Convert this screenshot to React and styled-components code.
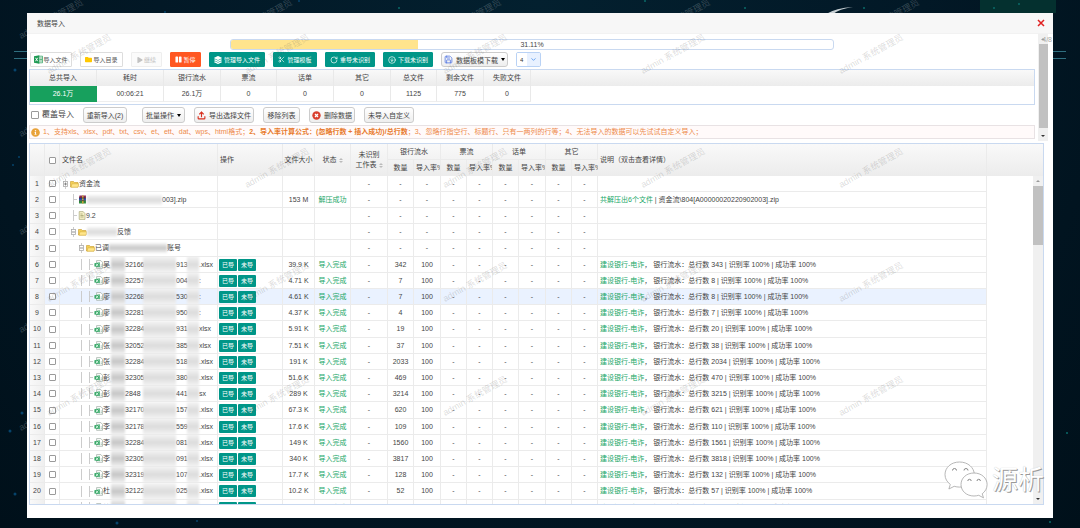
import React, { useState } from 'react';
import styled, { createGlobalStyle, css } from 'styled-components';
import { FaPlay, FaPause, FaFolder, FaLayerGroup, FaInfoCircle } from 'react-icons/fa';
import { RotateCw, CircleArrowDown, Save, Upload, ChevronDown, Scissors } from 'lucide-react';

const GlobalStyle = createGlobalStyle`
  * {
    box-sizing: border-box;
  }
  body {
    margin: 0;
    background: #00121e;
    font-family: "Liberation Sans", "Noto Sans CJK SC", sans-serif;
    font-size: 7px;
    line-height: 10px;
    color: #444;
  }
  button, input, select {
    font-family: inherit;
    margin: 0;
  }
`;

const PageStyles = styled.div`
  position: relative;
  min-height: 100vh;
  padding: 13px 27px 10px;
  overflow: hidden;
  background: radial-gradient(ellipse at 50% 0, #03202f 0%, #021826 50%, #00101a 100%);
`;

const Backdrop = styled.svg`
  position: absolute;
  top: 0;
  left: 0;
  width: 100%;
  height: 100%;
`;

const Modal = styled.section`
  position: relative;
  background: #fff;
  padding-bottom: 13px;
`;

const TitleBar = styled.header`
  display: flex;
  align-items: center;
  justify-content: space-between;
  height: 21px;
  padding: 0 8px 0 10px;
  background: #f7f7f7;
  border-bottom: 1px solid #f2f2f2;
  h1 {
    margin: 0;
    font-size: 7px;
    line-height: 9px;
    font-weight: 400;
  }
`;

const CloseButton = styled.button`
  display: flex;
  padding: 0;
  border: 0;
  background: none;
`;

const Body = styled.div`
  position: relative;
  overflow: hidden;
`;

const TopPane = styled.div`
  display: flex;
  gap: 3px;
  height: 107px;
  padding: 0 5px 0 2px;
`;

const TopContent = styled.div`
  flex: 1;
  display: flex;
  flex-direction: column;
  gap: 2px;
  padding-top: 5px;
`;

const ProgressTrack = styled.div`
  position: relative;
  width: 60%;
  height: 11px;
  margin: 0 auto;
  border: 1px solid #c9d9f0;
  border-radius: 3px;
  text-align: center;
  line-height: 9px;
  overflow: hidden;
`;

const ProgressFill = styled.div`
  position: absolute;
  top: 0;
  left: 0;
  bottom: 0;
  background: #ffe48d;
`;

const ButtonRow = styled.div`
  display: flex;
  align-items: center;
  gap: 8px;
  height: 15px;
  padding-left: 1px;
`;

const tones = {
  plain: css`
    background: #fff;
    border-color: #ddd;
    color: #555;
  `,
  disabled: css`
    background: #fbfbfb;
    border-color: #eee;
    color: #c2c2c2;
  `,
  orange: css`
    background: #ff5722;
    border-color: #ff5722;
    color: #fff;
  `,
  teal: css`
    background: #009688;
    border-color: #009688;
    color: #fff;
  `,
};

const ActionButton = styled.button`
  display: flex;
  align-items: center;
  justify-content: center;
  gap: ${p => p.$gap || 0}px;
  width: ${p => p.$width}px;
  height: 15px;
  padding: 0;
  border: 1px solid;
  border-radius: 1px;
  font-size: 6px;
  line-height: 8px;
  white-space: nowrap;
  ${p => tones[p.$tone]}
`;

const SoftButton = styled.button`
  display: flex;
  align-items: center;
  justify-content: center;
  gap: 3px;
  width: ${p => p.$width}px;
  height: ${p => p.$height || 16}px;
  margin-right: ${p => p.$after || 0}px;
  padding: 0;
  border: 1px solid #ccc;
  border-radius: 3px;
  background: linear-gradient(#fff, #eee);
  color: #444;
  font-size: 7px;
  white-space: nowrap;
`;

const Caret = styled.span`
  border: 2px solid transparent;
  border-top: 3px solid #000;
  border-bottom: 0;
`;

const ComboBox = styled.label`
  display: flex;
  width: 25px;
  height: 15px;
  border: 1px solid #b9d2f5;
  border-radius: 2px;
  overflow: hidden;
  select {
    appearance: none;
    width: 10px;
    padding: 0 0 0 3px;
    border: 0;
    background: #fff;
    color: #333;
    font-size: 6px;
  }
  span {
    flex: 1;
    display: flex;
    align-items: center;
    justify-content: center;
    background: #e8f1ff;
  }
`;

const SummaryBox = styled.div`
  height: 36px;
  border: 1px solid #c9d9f0;
`;

const SummaryTable = styled.table`
  width: 100%;
  table-layout: fixed;
  border-collapse: separate;
  border-spacing: 0;
  text-align: center;
  thead tr {
    background: linear-gradient(#f9f9f9, #ececec);
  }
  th, td {
    height: 16px;
    padding: 0;
    font-weight: 400;
    border-right: 1px solid #e9e9e9;
  }
  td {
    border-bottom: 1px solid #eee;
  }
  th:last-child, td:last-child {
    border: 0;
  }
  td:first-child {
    background: #17a05d;
    border-color: #17a05d;
    color: #fff;
  }
`;

const ToolRow = styled.div`
  display: flex;
  align-items: center;
  gap: 9px;
  height: 16px;
  padding-left: 2px;
`;

const CheckLabel = styled.label`
  display: flex;
  align-items: center;
  gap: 3px;
  font-size: 8px;
`;

const Check = styled.input`
  appearance: none;
  display: block;
  width: ${p => p.$size || 7}px;
  height: ${p => p.$size || 7}px;
  border: 1px solid #9a9a9a;
  border-radius: 1px;
  background: #fff;
`;

const Notice = styled.p`
  display: flex;
  align-items: center;
  gap: 3px;
  height: 14px;
  margin: 0;
  padding-left: 1px;
  border: 1px solid #e8e2e4;
  background: #fffafa;
  color: #ee8a4a;
  white-space: nowrap;
  b {
    color: #e87a2c;
  }
`;

const ScrollTrack = styled.div`
  display: flex;
  flex-direction: column;
  align-items: center;
  justify-content: space-between;
  width: 10px;
  background: #f0f0f0;
`;

const ScrollThumb = styled.div`
  width: ${p => p.$wide ? 10 : 9}px;
  height: ${p => p.$height}px;
  margin-bottom: auto;
  background: #c1c1c1;
`;

const ScrollArrow = styled.span`
  margin: 4px 0;
  border: 2px solid transparent;
  ${p => p.$up
    ? css`border-bottom-color: #999; border-top: 0;`
    : css`border-top-color: #333; border-bottom: 0;`}
`;

const GridPanel = styled.div`
  margin: 2px 9px 0 2px;
  border: 1px solid #c9d9f0;
`;

const GridBody = styled.div`
  display: flex;
  height: 328px;
  overflow: hidden;
`;

const GridTable = styled.table`
  flex: 1;
  width: 100%;
  table-layout: fixed;
  border-collapse: separate;
  border-spacing: 0;
  text-align: center;
  th, td {
    padding: 0;
    font-weight: 400;
    white-space: nowrap;
    overflow: hidden;
    border-right: 1px solid #ebebeb;
    border-bottom: 1px solid #ebebeb;
  }
  th:last-child, td:last-child {
    border: 0;
  }
  input {
    margin: 0 auto;
  }
`;

const GridHead = styled.thead`
  background: linear-gradient(#f9f9f9, #ececec);
  th {
    height: 16px;
  }
  tr:last-child th, th[rowspan] {
    border-bottom: 0;
  }
`;

const HeadCell = styled.th`
  text-align: ${p => p.$left ? 'left' : 'center'};
  ${p => p.$left && css`&& { padding-left: 2px; }`}
`;

const Row = styled.tr`
  height: 16px;
  background: ${p => p.$active ? '#eaf2ff' : '#fff'};
  &:nth-child(5n) {
    height: 17px;
  }
  td:first-child {
    background: linear-gradient(90deg, #f9f9f9, #efefef);
  }
  td:last-child {
    background: #fff;
  }
`;

const TextCell = styled.td`
  text-align: left;
  && {
    padding-left: 2px;
  }
`;

const Green = styled.span`
  color: #22a768;
`;

const SortMark = styled.i`
  display: inline-flex;
  flex-direction: column;
  gap: 1px;
  margin-left: 2px;
  vertical-align: middle;
  &::before, &::after {
    content: "";
    border: 2px solid transparent;
  }
  &::before {
    border-bottom-color: #bbb;
    border-top: 0;
  }
  &::after {
    border-top-color: #bbb;
    border-bottom: 0;
  }
`;

const TreeNode = styled.div`
  display: flex;
  align-items: center;
  height: 15px;
  svg {
    flex: none;
  }
`;

const Indent = styled.span`
  flex: none;
  width: ${p => p.$size || 8}px;
`;

const NamePart = styled.span`
  flex: none;
  width: ${p => p.$width}px;
`;

// hidden part of a name
const Smudge = styled.span`
  flex: none;
  width: ${p => p.$width}px;
  height: ${p => p.$full ? 17 : 10}px;
  background: linear-gradient(#f4f4f4, ${p => p.$dark ? '#c6c6c6' : '#dcdcdc'} 50%, #f4f4f4);
  filter: blur(1px);
`;

const Tags = styled.div`
  display: flex;
  gap: 1px;
  padding-left: 1px;
`;

const TagButton = styled.button`
  width: 18px;
  height: 12px;
  padding: 0;
  border: 0;
  border-radius: 1px;
  background: #009688;
  color: #fff;
  font-size: 6px;
  line-height: 12px;
`;

const MarkLayer = styled.div`
  position: absolute;
  top: ${p => p.$top}px;
  left: ${p => p.$left}px;
  display: grid;
  grid-template-columns: repeat(5, ${p => p.$stepX}px);
  grid-auto-rows: ${p => p.$stepY}px;
  pointer-events: none;
  color: ${p => p.$color};
  font-size: 9px;
  line-height: 12px;
  white-space: nowrap;
  span {
    justify-self: start;
    align-self: start;
    transform: rotate(-29deg);
  }
`;

const CornerNote = styled.span`
  position: absolute;
  top: 1px;
  right: 1px;
  color: #aaa;
`;

const Brand = styled.div`
  position: absolute;
  right: 9px;
  bottom: 19px;
  display: flex;
  align-items: center;
  gap: 3px;
  color: #fff;
  font-size: 26px;
  line-height: 38px;
  text-shadow: 1px 1px 0 #999, 0 0 1px #bbb;
`;

const FolderIcon = () => (
  <svg width="9" height="8" viewBox="0 0 9 8">
    <path d="M0.5 7V1.5h3l1 1h3.5V7z" fill="#f3cf55" stroke="#c79a2a" strokeWidth="0.6" />
    <path d="M1 7.2 2 3.8h6.8L8 7.2z" fill="#ffe68a" stroke="#d2a93a" strokeWidth="0.5" />
  </svg>
);

const RarIcon = () => (
  <svg width="9" height="9" viewBox="0 0 9 9">
    <path d="M1.5 0.5H8V3H1z" fill="#8c2a5a" />
    <path d="M1 3h7v2.5H1z" fill="#2b4fa8" />
    <path d="M1 5.8h7v2.7H1z" fill="#2f8a3c" />
    <path d="M4 0.5h1.6v8H4z" fill="#c9a13a" />
    <path d="M1 3h7M1 5.6h7" stroke="#222" strokeWidth="0.6" />
  </svg>
);

const PageIcon = () => (
  <svg width="8" height="9" viewBox="0 0 8 9">
    <path d="M1.2 0.6h4l1.8 2v5.8H1.2z" fill="#f6f1c8" stroke="#9a9a6a" strokeWidth="0.6" />
    <path d="M2.4 3h2.2M2.4 4.5h3.2M2.4 6h3.2" stroke="#8a8a50" strokeWidth="0.6" />
  </svg>
);

const SheetIcon = () => (
  <svg width="9" height="9" viewBox="0 0 9 9">
    <path d="M2.6 0.6h4.2L8.5 2.3v6H2.6z" fill="#fff" stroke="#8a9a90" strokeWidth="0.6" />
    <path d="M0.4 3.2 5.8 2.2v5L0.4 6.4z" fill="#3ba86a" />
    <path d="m2 3.8 2.4 2.2M4.4 3.6 2 6" stroke="#e6fff0" strokeWidth="0.8" />
    <path d="M6.6 5h1.4M6.6 6.6h1.4" stroke="#7aa890" strokeWidth="0.6" />
  </svg>
);

const ExcelIcon = () => (
  <svg width="9" height="9" viewBox="0 0 9 9">
    <path d="M4.5 1.2h4v6.6h-4z" fill="#fff" stroke="#1f9a55" strokeWidth="0.7" />
    <path d="M5.5 3h2.5M5.5 4.5h2.5M5.5 6h2.5" stroke="#1f9a55" strokeWidth="0.7" />
    <path d="M0 1.2 5.3 0.2v8.6L0 7.8z" fill="#1f9a55" />
    <path d="m1.5 2.8 2.2 3.4M3.7 2.8 1.5 6.2" stroke="#fff" strokeWidth="0.9" />
  </svg>
);

const DeleteIcon = () => (
  <svg width="9" height="9" viewBox="0 0 9 9">
    <circle cx="4.5" cy="4.5" r="4.2" fill="#d9402f" />
    <path d="m3 3 3 3M6 3 3 6" stroke="#fff" strokeWidth="1.3" />
  </svg>
);

const Expander = ({ plus }) => (
  <svg width="8" height="16" viewBox="0 0 8 16">
    <path d="M3.5 3v2M3.5 11v2" stroke="#ccc" />
    <rect x="1.5" y="5.5" width="4" height="5" fill="#fff" stroke="#aaa" strokeWidth="0.8" />
    <path d={plus ? 'M2 8h3M3.5 6.5v3' : 'M2 8h3'} stroke="#666" strokeWidth="0.7" />
  </svg>
);

const Line = ({ branch }) => (
  <svg width="8" height="15" viewBox="0 0 8 15">
    <path d={branch ? 'M3.5 2v11M4 7.5H7' : 'M3.5 2v11'} fill="none" stroke="#ccc" />
  </svg>
);

const WeChatIcon = () => (
  <svg width="45" height="38" viewBox="0 0 45 38">
    <g fill="#fff" stroke="#a5a5a5" strokeWidth="0.8">
      <path d="M15.500 1C7 1 1 6.600 1 13.600c0 4 2 7.400 5.300 9.800L4.900 28l5.300-2.700c1.900.5 3.500.8 5.300.8 9 0 14.800-5.600 14.800-12.500S24 1 15.500 1z" />
      <path d="M30 12c-7.500 0-13 5-13 11.500S22.500 35 30 35c1.700 0 3.200-.3 4.700-.7l4.800 2.500-1.300-4c3-2.200 4.900-5.400 4.900-9.300C43.100 17 37.500 12 30 12z" />
    </g>
    <g fill="none" stroke="#888" strokeWidth="1">
      <path d="M8.500 9.500a2 2 0 0 1 4 0M20 9.500a2 2 0 0 1 4 0M23.800 20a1.700 1.700 0 0 1 3.400 0M33 20a1.700 1.700 0 0 1 3.400 0" />
    </g>
  </svg>
);

const summary = [
  ['总共导入', '26.1万', 67],
  ['耗时', '00:06:21', 67],
  ['银行流水', '26.1万', 57],
  ['票流', '0', 56],
  ['话单', '0', 57],
  ['其它', '0', 57],
  ['总文件', '1125', 46],
  ['剩余文件', '775', 47],
  ['失败文件', '0', 47],
];

// surname, id part, id tail, extension, size, count, total
const files = [
  ['吴', '32166', '913', '.xlsx', '39.9 K', 342, 343],
  ['廖', '32257', '004', ':', '4.71 K', 7, 8],
  ['廖', '32268', '530', ':', '4.61 K', 7, 8],
  ['廖', '32281', '950', ':', '4.37 K', 4, 7],
  ['廖', '32284', '931', 'xlsx', '5.91 K', 19, 20],
  ['张', '32052', '385', 'xlsx', '7.51 K', 37, 38],
  ['张', '32284', '518', '.xlsx', '191 K', 2033, 2034],
  ['彭', '32305', '380', '.xlsx', '51.6 K', 469, 470],
  ['彭', '2848', '441', 'sx', '289 K', 3214, 3215],
  ['李', '32170', '157', '.xlsx', '67.3 K', 620, 621],
  ['李', '32178', '559', '.xlsx', '17.6 K', 109, 110],
  ['李', '32284', '081', '.xlsx', '149 K', 1560, 1561],
  ['李', '32305', '091', '.xlsx', '340 K', 3817, 3818],
  ['李', '32319', '107', '.xlsx', '17.7 K', 128, 132],
  ['杜', '32122', '025', '.xlsx', '10.2 K', 52, 57],
  ['杜', '32122', '031', '.xlsx', '10.4 K', 53, 54],
];

const columns = [15, 15, 158, 65, 32, 36, 37, 26, 27, 26, 26, 26, 27, 26, 26, null];
const groups = ['银行流水', '票流', '话单', '其它'];

const Columns = ({ filler }) => (
  <colgroup>
    {columns.map((w, i) => <col key={i} style={w ? { width: w } : undefined} />)}
    <col style={{ width: filler }} />
  </colgroup>
);

function GridRow({ index, name, tags, size, status, counts = [], note, active }) {
  const [checked, setChecked] = useState(false);
  return (
    <Row $active={active}>
      <td>{index}</td>
      <td>
        <Check type="checkbox" aria-label={`选择 ${index}`} checked={checked} onChange={() => setChecked(!checked)} />
      </td>
      <TextCell><TreeNode>{name}</TreeNode></TextCell>
      <td>
        {tags && (
          <Tags>
            <TagButton>已导</TagButton>
            <TagButton>未导</TagButton>
          </Tags>
        )}
      </td>
      <td>{size}</td>
      <td><Green>{status}</Green></td>
      {Array.from({ length: 9 }, (_, i) => <td key={i}>{counts[i - 1] ?? '-'}</td>)}
      <TextCell>{note}</TextCell>
      <td />
    </Row>
  );
}

const Marks = ({ rows, ...rest }) => (
  <MarkLayer aria-hidden="true" {...rest}>
    {Array.from({ length: rows * 5 }, (_, i) => <span key={i}>admin 系统管理员</span>)}
  </MarkLayer>
);

export default function App() {
  const progress = 31.11;
  return (
    <>
      <GlobalStyle />
      <PageStyles>
        <Backdrop viewBox="0 0 1080 528" preserveAspectRatio="xMidYMid slice">
          <rect x="980" width="76" height="13" fill="#04302f" />
          <path d="M14 51.500h14M14 58.500h14M1052 51.500h14M1052 58.500h14" stroke="#2f6f80" />
          <path d="M826 14q10-6 27-7-14 2-20 7z" fill="#c8d0d4" />
          <g fill="#06436b">
            <circle cx="15" cy="70" r="1.500" /><circle cx="19" cy="157" r="1" />
            <circle cx="13" cy="165" r="1" /><circle cx="22" cy="413" r="1.500" />
            <circle cx="10" cy="431" r="1.500" /><circle cx="15" cy="494" r="1.500" />
            <circle cx="117" cy="523" r="1.500" /><circle cx="197" cy="521" r="1" />
            <circle cx="165" cy="12" r="1" /><circle cx="299" cy="1" r="1" />
          </g>
          <g fill="#0a6a68">
            <circle cx="994" cy="8" r="1" /><circle cx="1019" cy="4" r="1" />
            <circle cx="645" cy="1" r="1" /><circle cx="864" cy="8" r="1" />
            <circle cx="1067" cy="433" r="1" /><circle cx="1050" cy="522" r="1" />
            <circle cx="745" cy="8" r="1" /><circle cx="399" cy="8" r="1" />
          </g>
        </Backdrop>
        <Marks rows={5} $top={13} $left={15} $stepX={209} $stepY={98} $color="rgba(170, 180, 185, 0.3)" />
        <Modal>
          <TitleBar>
            <h1>数据导入</h1>
            <CloseButton aria-label="关闭">
              <svg width="8" height="8" viewBox="0 0 8 8">
                <path d="m1 1 6 6M7 1 1 7" stroke="#e02020" strokeWidth="1.500" />
              </svg>
            </CloseButton>
          </TitleBar>
          <Body>
            <TopPane>
              <TopContent>
                <ProgressTrack>
                  <ProgressFill style={{ width: `${progress}%` }} />
                  {progress}%
                </ProgressTrack>
                <ButtonRow>
                  <ActionButton $tone="plain" $width={42}><ExcelIcon />导入文件</ActionButton>
                  <ActionButton $tone="plain" $width={43} $gap={1}><FaFolder size={7} color="#ffc800" />导入目录</ActionButton>
                  <ActionButton $tone="disabled" $width={31} $gap={1} disabled><FaPlay size={6} />继续</ActionButton>
                  <ActionButton $tone="orange" $width={31} $gap={1}><FaPause size={7} />暂停</ActionButton>
                  <ActionButton $tone="teal" $width={56} $gap={2}><FaLayerGroup size={8} />管理导入文件</ActionButton>
                  <ActionButton $tone="teal" $width={44} $gap={2}><Scissors size={7} />管理模板</ActionButton>
                  <ActionButton $tone="teal" $width={50} $gap={2}><RotateCw size={8} />重导未识别</ActionButton>
                  <ActionButton $tone="teal" $width={50} $gap={2}><CircleArrowDown size={8} />下载未识别</ActionButton>
                  <SoftButton $width={67} $height={15}><Save size={9} color="#4a6fe0" />数据板模下载<Caret /></SoftButton>
                  <ComboBox>
                    <select aria-label="数量" defaultValue="4"><option>4</option></select>
                    <span><ChevronDown size={7} color="#5b9bf0" strokeWidth={3} /></span>
                  </ComboBox>
                </ButtonRow>
                <SummaryBox>
                  <SummaryTable>
                    <colgroup>
                      {summary.map(([label, , w]) => <col key={label} style={{ width: w }} />)}
                      <col />
                    </colgroup>
                    <thead>
                      <tr>{summary.map(([label]) => <th key={label}>{label}</th>)}<th /></tr>
                    </thead>
                    <tbody>
                      <tr>{summary.map(([label, value]) => <td key={label}>{value}</td>)}<td /></tr>
                    </tbody>
                  </SummaryTable>
                </SummaryBox>
                <ToolRow>
                  <CheckLabel><Check type="checkbox" $size={8} />覆盖导入</CheckLabel>
                  <SoftButton $width={44} $after={6}>重新导入(2)</SoftButton>
                  <SoftButton $width={43}>批量操作<Caret /></SoftButton>
                  <SoftButton $width={60}><Upload size={9} color="#d8301f" strokeWidth={3} />导出选择文件</SoftButton>
                  <SoftButton $width={37}>移除列表</SoftButton>
                  <SoftButton $width={46}><DeleteIcon />删除数据</SoftButton>
                  <SoftButton $width={50}>未导入自定义</SoftButton>
                </ToolRow>
                <Notice>
                  <FaInfoCircle size={9} color="#e8a33a" />
                  <span>
                    1、支持xls、xlsx、pdf、txt、csv、et、ett、dat、wps、html格式；<b>2、导入率计算公式：(忽略行数 + 插入成功)/总行数</b>；3、忽略行指空行、标题行、只有一两列的行等；4、无法导入的数据可以先试试自定义导入；
                  </span>
                </Notice>
              </TopContent>
              <ScrollTrack>
                <ScrollArrow $up />
                <ScrollThumb $height={84} />
                <ScrollArrow />
              </ScrollTrack>
            </TopPane>
            <GridPanel>
              <GridTable>
                <Columns filler={56} />
                <GridHead>
                  <tr>
                    <HeadCell rowSpan={2} />
                    <HeadCell rowSpan={2}><Check type="checkbox" aria-label="全选" /></HeadCell>
                    <HeadCell rowSpan={2} $left>文件名</HeadCell>
                    <HeadCell rowSpan={2} $left>操作</HeadCell>
                    <HeadCell rowSpan={2}>文件大小</HeadCell>
                    <HeadCell rowSpan={2}>状态<SortMark /></HeadCell>
                    <HeadCell rowSpan={2}>未识别<br />工作表<SortMark /></HeadCell>
                    {groups.map(g => <HeadCell key={g} colSpan={2}>{g}</HeadCell>)}
                    <HeadCell rowSpan={2} $left>说明（双击查看详情）</HeadCell>
                    <HeadCell rowSpan={2} />
                  </tr>
                  <tr>
                    {groups.map(g => (
                      <React.Fragment key={g}>
                        <HeadCell>数量</HeadCell>
                        <HeadCell $left>导入率%</HeadCell>
                      </React.Fragment>
                    ))}
                  </tr>
                </GridHead>
              </GridTable>
              <GridBody>
                <GridTable>
                  <Columns filler={46} />
                  <tbody>
                    <GridRow index={1} name={<><Expander plus /><FolderIcon />资金流</>} />
                    <GridRow
                      index={2}
                      name={<><Indent /><Line branch /><RarIcon /><Smudge $width={75} />003].zip</>}
                      size="153 M"
                      status="解压成功"
                      note={<><Green>共解压出6个文件</Green> | 资金流\804[A00000020220902003].zip</>}
                    />
                    <GridRow index={3} name={<><Indent /><Line branch /><PageIcon />9.2</>} />
                    <GridRow index={4} name={<><Indent /><Expander /><FolderIcon /><Smudge $width={30} />反馈</>} />
                    <GridRow index={5} name={<><Indent $size={16} /><Expander /><FolderIcon />已调<Smudge $width={58} $dark />账号</>} />
                    {files.map(([surname, id, tail, ext, size, count, total], i) => (
                      <GridRow
                        key={i}
                        index={i + 6}
                        active={i === 2}
                        tags
                        size={size}
                        status="导入完成"
                        counts={[count, 100]}
                        note={<><Green>建设银行-电诈</Green>， 银行流水：总行数 {total} | 识别率 100% | 成功率 100%</>}
                        name={
                          <>
                            <Indent $size={16} /><Line /><Line branch /><SheetIcon />
                            <NamePart $width={8}>{surname}</NamePart>
                            <Smudge $width={14} $full $dark />
                            <NamePart $width={18}>{id}</NamePart>
                            <Smudge $width={33} $full />
                            <NamePart $width={11}>{tail}</NamePart>
                            <Smudge $width={12} $full />
                            <NamePart>{ext}</NamePart>
                          </>
                        }
                      />
                    ))}
                  </tbody>
                </GridTable>
                <ScrollTrack>
                  <ScrollArrow $up />
                  <ScrollThumb $wide $height={59} />
                  <ScrollArrow />
                </ScrollTrack>
              </GridBody>
            </GridPanel>
            <Marks rows={4} $top={14} $left={16} $stepX={198} $stepY={114} $color="rgba(90, 90, 90, 0.22)" />
            <CornerNote>4/8</CornerNote>
          </Body>
          <Brand><WeChatIcon />源析</Brand>
        </Modal>
      </PageStyles>
    </>
  );
}
